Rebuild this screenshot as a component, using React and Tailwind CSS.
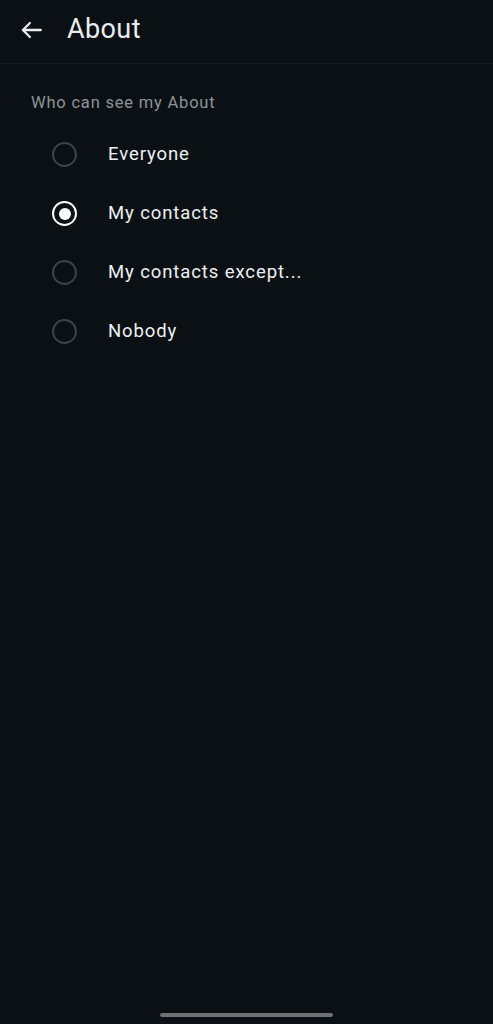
import { useState } from "react";

const options = ["Everyone", "My contacts", "My contacts except...", "Nobody"];

function App() {
  const [selected, setSelected] = useState("My contacts");

  return (
    <div
      className="min-h-screen w-full bg-[#0b1014] flex flex-col text-white"
      style={{ fontFamily: "Roboto, 'Noto Sans', sans-serif" }}
    >
      <div className="h-16 flex items-center border-b border-[#161c21] shrink-0">
        <button className="ml-[18px] w-[26px] h-[26px] flex items-center justify-center text-[#e9edef] mb-[4px]">
          <svg width="26" height="26" viewBox="0 0 24 24" fill="none">
            <path
              d="M21 12H4.5M11 5.5L4.5 12l6.5 6.5"
              stroke="currentColor"
              strokeWidth="2.1"
              strokeLinecap="round"
              strokeLinejoin="round"
            />
          </svg>
        </button>
        <h1 className="ml-[23px] text-[27px] leading-none text-[#e9edef] tracking-[0.4px] pb-[4px]">About</h1>
      </div>

      <div className="flex-1 flex flex-col">
        <p className="mt-[30px] ml-[31px] text-[16.5px] leading-[18px] text-[#8b9499] tracking-[0.8px]">
          Who can see my About
        </p>
        <div className="mt-[13px] flex flex-col">
          {options.map((opt) => {
            const on = opt === selected;
            return (
              <button
                key={opt}
                onClick={() => setSelected(opt)}
                className="h-[59px] flex items-center text-left"
              >
                <span
                  className={
                    on
                      ? "ml-[52px] w-[25px] h-[25px] rounded-full border-[2.5px] border-white flex items-center justify-center"
                      : "ml-[52px] w-[25px] h-[25px] rounded-full border-2 border-[#3b4349] flex items-center justify-center"
                  }
                >
                  {on && <span className="w-[12px] h-[12px] rounded-full bg-white" />}
                </span>
                <span className="ml-[31px] text-[18.5px] text-[#edf0f2] tracking-[0.9px]">{opt}</span>
              </button>
            );
          })}
        </div>
      </div>

      <div className="h-[12px] flex items-start justify-center shrink-0">
        <div className="mt-[1px] w-[173px] h-[4px] rounded-full bg-[#6f7174]" />
      </div>
    </div>
  );
}

export default App;
